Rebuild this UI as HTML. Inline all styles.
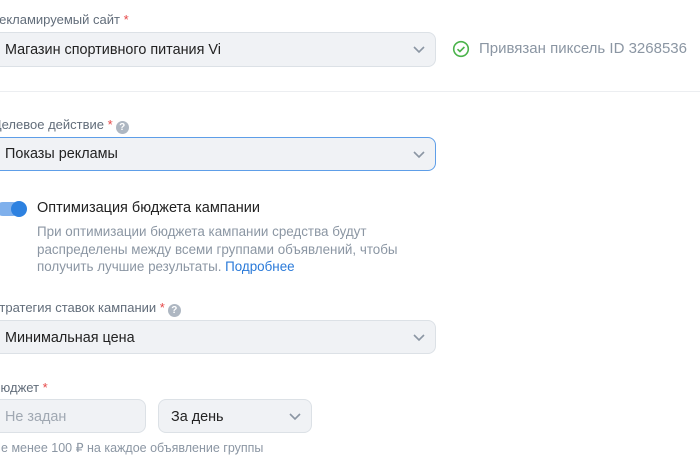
<!DOCTYPE html>
<html><head><meta charset="utf-8"><style>
body{margin:0;width:700px;height:465px;background:#fff;position:relative;overflow:hidden;font-family:"Liberation Sans","Noto Sans CJK SC",sans-serif;color:#222}
.a{position:absolute;white-space:nowrap}
.lbl{font-size:13px;color:#626d7a}
.st{color:#e64646}
.q{display:inline-block;width:13px;height:13px;border-radius:50%;background:#aeb7c2;color:#fff;font-size:10px;font-weight:bold;text-align:center;line-height:13px;vertical-align:-1px;margin-left:3px}
.sel{position:absolute;box-sizing:border-box;background:#f0f2f5;border:1px solid #dce1e6;border-radius:8px;font-size:14.4px;line-height:34px;padding-left:4px}
.chev{position:absolute;right:10px;top:13px}
</style></head><body>
<div class="a lbl" style="left:-9px;top:12px">Рекламируемый сайт <span class="st">*</span></div>
<div class="sel" style="left:-10px;top:32px;width:446px;height:35px;padding-left:14px">Магазин спортивного питания Vi<svg class="chev" width="12" height="8"><path d="M1 1l5 5 5-5" stroke="#8b96a3" stroke-width="1.6" fill="none"/></svg></div>
<svg class="a" style="left:452px;top:40px" width="18" height="18"><circle cx="9" cy="9" r="7.3" stroke="#4bb34b" stroke-width="1.6" fill="none"/><path d="M5.5 9.2l2.4 2.3 4.5-4.5" stroke="#4bb34b" stroke-width="1.6" fill="none"/></svg>
<div class="a" style="left:479px;top:40px;font-size:15px;color:#8b96a3">Привязан пиксель ID 3268536</div>
<div class="a" style="left:0;top:91px;width:700px;height:1px;background:#eceef1"></div>
<div class="a lbl" style="left:-8px;top:117px">Целевое действие <span class="st">*</span><span class="q">?</span></div>
<div class="sel" style="left:-10px;top:137px;width:446px;height:34px;border-color:#5e9ee8;padding-left:14px;line-height:33px">Показы рекламы<svg class="chev" width="12" height="8"><path d="M1 1l5 5 5-5" stroke="#8b96a3" stroke-width="1.6" fill="none"/></svg></div>
<div class="a" style="left:-4px;top:202px;width:24px;height:14px;border-radius:7px;background:#7fb0ec"></div>
<div class="a" style="left:11px;top:201px;width:16px;height:16px;border-radius:50%;background:#2d81e0"></div>
<div class="a" style="left:37px;top:200px;font-size:14.5px;color:#222">Оптимизация бюджета кампании</div>
<div class="a" style="left:37px;top:223px;font-size:13.4px;color:#8b96a3;line-height:17.5px">При оптимизации бюджета кампании средства будут<br>распределены между всеми группами объявлений, чтобы<br>получить лучшие результаты. <span style="color:#2a7ad9">Подробнее</span></div>
<div class="a lbl" style="left:-10px;top:300px">Стратегия ставок кампании <span class="st">*</span><span class="q">?</span></div>
<div class="sel" style="left:-10px;top:320px;width:446px;height:34px;padding-left:14px">Минимальная цена<svg class="chev" width="12" height="8"><path d="M1 1l5 5 5-5" stroke="#8b96a3" stroke-width="1.6" fill="none"/></svg></div>
<div class="a lbl" style="left:-8px;top:380px">Бюджет <span class="st">*</span></div>
<div class="sel" style="left:-10px;top:399px;width:156px;height:34px;padding-left:14px;color:#a0a8b2">Не задан</div>
<div class="sel" style="left:158px;top:399px;width:154px;height:34px;padding-left:12px">За день<svg class="chev" width="12" height="8"><path d="M1 1l5 5 5-5" stroke="#8b96a3" stroke-width="1.6" fill="none"/></svg></div>
<div class="a" style="left:-8px;top:440px;font-size:12.5px;color:#8b96a3">Не менее 100 ₽ на каждое объявление группы</div>
</body></html>
